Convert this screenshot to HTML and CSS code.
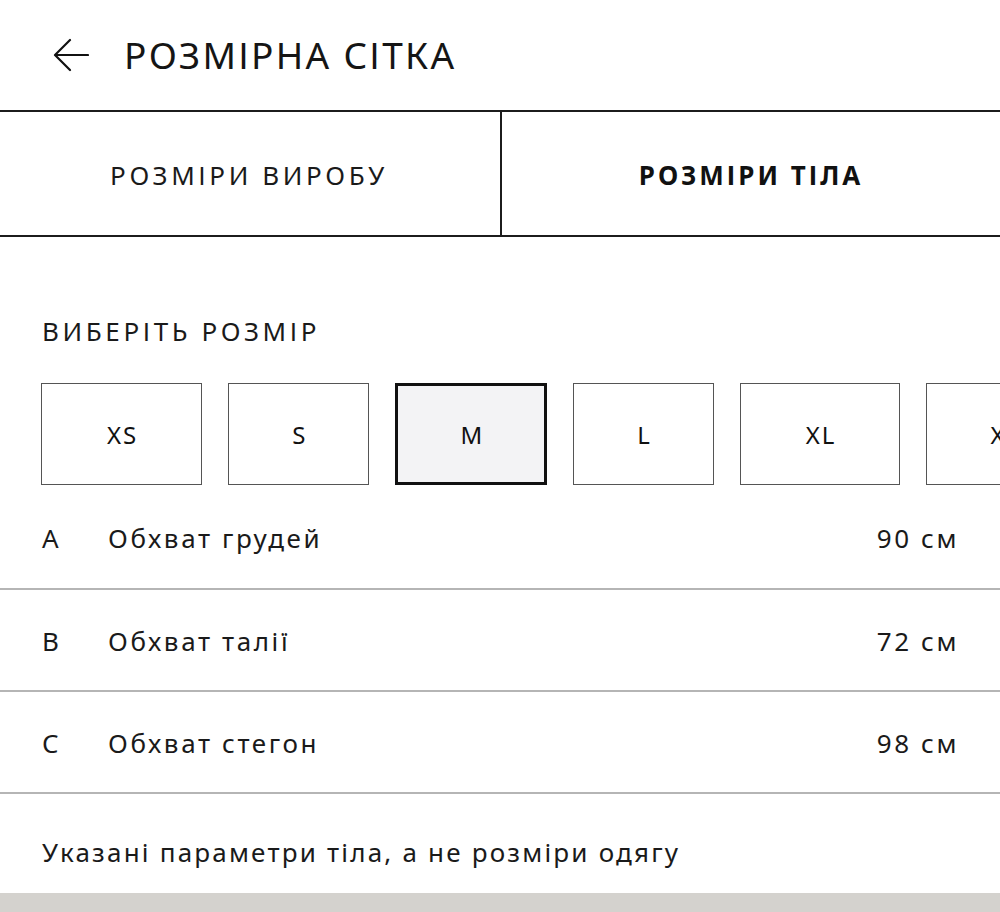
FILE: index.html
```html
<!DOCTYPE html>
<html lang="uk">
<head>
<meta charset="utf-8">
<title>Розмірна сітка</title>
<link rel="stylesheet" href="styles.css">
</head>
<body>
<div class="page">
  <header class="topbar">
    <svg class="back" width="36" height="34" viewBox="0 0 36 34" aria-hidden="true">
      <path d="M35 17H3M17 2L2 17L17 32" fill="none" stroke="#111" stroke-width="2.2" stroke-linecap="round" stroke-linejoin="round"/>
    </svg>
    <h1 class="title">РОЗМІРНА СІТКА</h1>
  </header>
  <nav class="tabs">
    <div class="tab">РОЗМІРИ ВИРОБУ</div>
    <div class="tab active">РОЗМІРИ ТІЛА</div>
  </nav>
  <section class="content">
    <div class="label">ВИБЕРІТЬ РОЗМІР</div>
    <div class="sizes">
      <div class="size wide">XS</div>
      <div class="size">S</div>
      <div class="size selected">M</div>
      <div class="size">L</div>
      <div class="size wide">XL</div>
      <div class="size">XXL</div>
    </div>
    <div class="rows">
      <div class="row"><span class="key">A</span><span class="name">Обхват грудей</span><span class="val">90 см</span></div>
      <div class="row"><span class="key">B</span><span class="name">Обхват талії</span><span class="val">72 см</span></div>
      <div class="row"><span class="key">C</span><span class="name">Обхват стегон</span><span class="val">98 см</span></div>
    </div>
    <p class="note">Указані параметри тіла, а не розміри одягу</p>
  </section>
  <div class="bottombar"></div>
</div>
</body>
</html>
```
FILE: styles.css
```css
html, body {
  margin: 0;
  padding: 0;
  background: #fff;
}
body {
  font-family: "Noto Sans", "Open Sans", sans-serif;
  color: #1a1a1a;
  overflow: hidden;
  width: 1000px;
  height: 912px;
}
.page {
  width: 1000px;
  height: 912px;
  display: flex;
  flex-direction: column;
  overflow: hidden;
}
.topbar {
  height: 112px;
  display: flex;
  align-items: center;
  padding-left: 53px;
  gap: 35px;
  border-bottom: 2px solid #1c1c1c;
  box-sizing: border-box;
  flex-shrink: 0;
}
.back {
  display: block;
}
.title {
  margin: 0 0 2px;
  font-weight: 400;
  font-size: 37px;
  letter-spacing: 2.3px;
  color: #151515;
  line-height: 1;
}
.tabs {
  display: grid;
  grid-template-columns: 502px 498px;
  height: 125px;
  border-bottom: 2px solid #1c1c1c;
  box-sizing: border-box;
  flex-shrink: 0;
}
.tab {
  display: flex;
  align-items: center;
  justify-content: center;
  font-size: 26px;
  letter-spacing: 3.6px;
  color: #1a1a1a;
  padding-top: 3px;
}
.tab:first-child {
  border-right: 2px solid #1c1c1c;
  padding-right: 2px;
}
.tab.active {
  font-weight: 700;
  letter-spacing: 3px;
  color: #111;
}
.content {
  display: flex;
  flex-direction: column;
  flex: 1;
}
.label {
  margin-top: 79px;
  padding-left: 42px;
  font-size: 26px;
  letter-spacing: 3.6px;
  line-height: 30px;
  color: #1a1a1a;
}
.sizes {
  display: flex;
  gap: 26px;
  margin-top: 37px;
  padding-left: 41px;
  white-space: nowrap;
}
.size {
  flex-shrink: 0;
  height: 102px;
  box-sizing: border-box;
  border: 1.5px solid #555;
  display: flex;
  align-items: center;
  justify-content: center;
  padding: 0 61px 0 63px;
  font-size: 24px;
  letter-spacing: 2px;
  color: #111;
}
.size.wide {
  padding: 0 63px 0 65px;
}
.size.selected {
  border: 3px solid #111;
  background: #f3f3f5;
  padding: 0 60px 0 62px;
}
.rows {
  display: flex;
  flex-direction: column;
}
.row {
  height: 105px;
  box-sizing: border-box;
  display: flex;
  align-items: center;
  padding: 2px 41px 0 42px;
  border-bottom: 2.5px solid #b5b5b5;
  font-size: 26px;
  color: #1a1a1a;
  letter-spacing: 2.6px;
}
.row + .row {
  height: 102px;
}
.key {
  width: 66px;
  flex-shrink: 0;
}
.name {
  flex: 1;
}
.val {
  text-align: right;
}
.note {
  margin: 40px 0 0 42px;
  font-size: 26px;
  letter-spacing: 2.2px;
  color: #1a1a1a;
  line-height: 36px;
}
.bottombar {
  margin-top: auto;
  height: 19px;
  background: #d4d2ce;
  flex-shrink: 0;
}
```
